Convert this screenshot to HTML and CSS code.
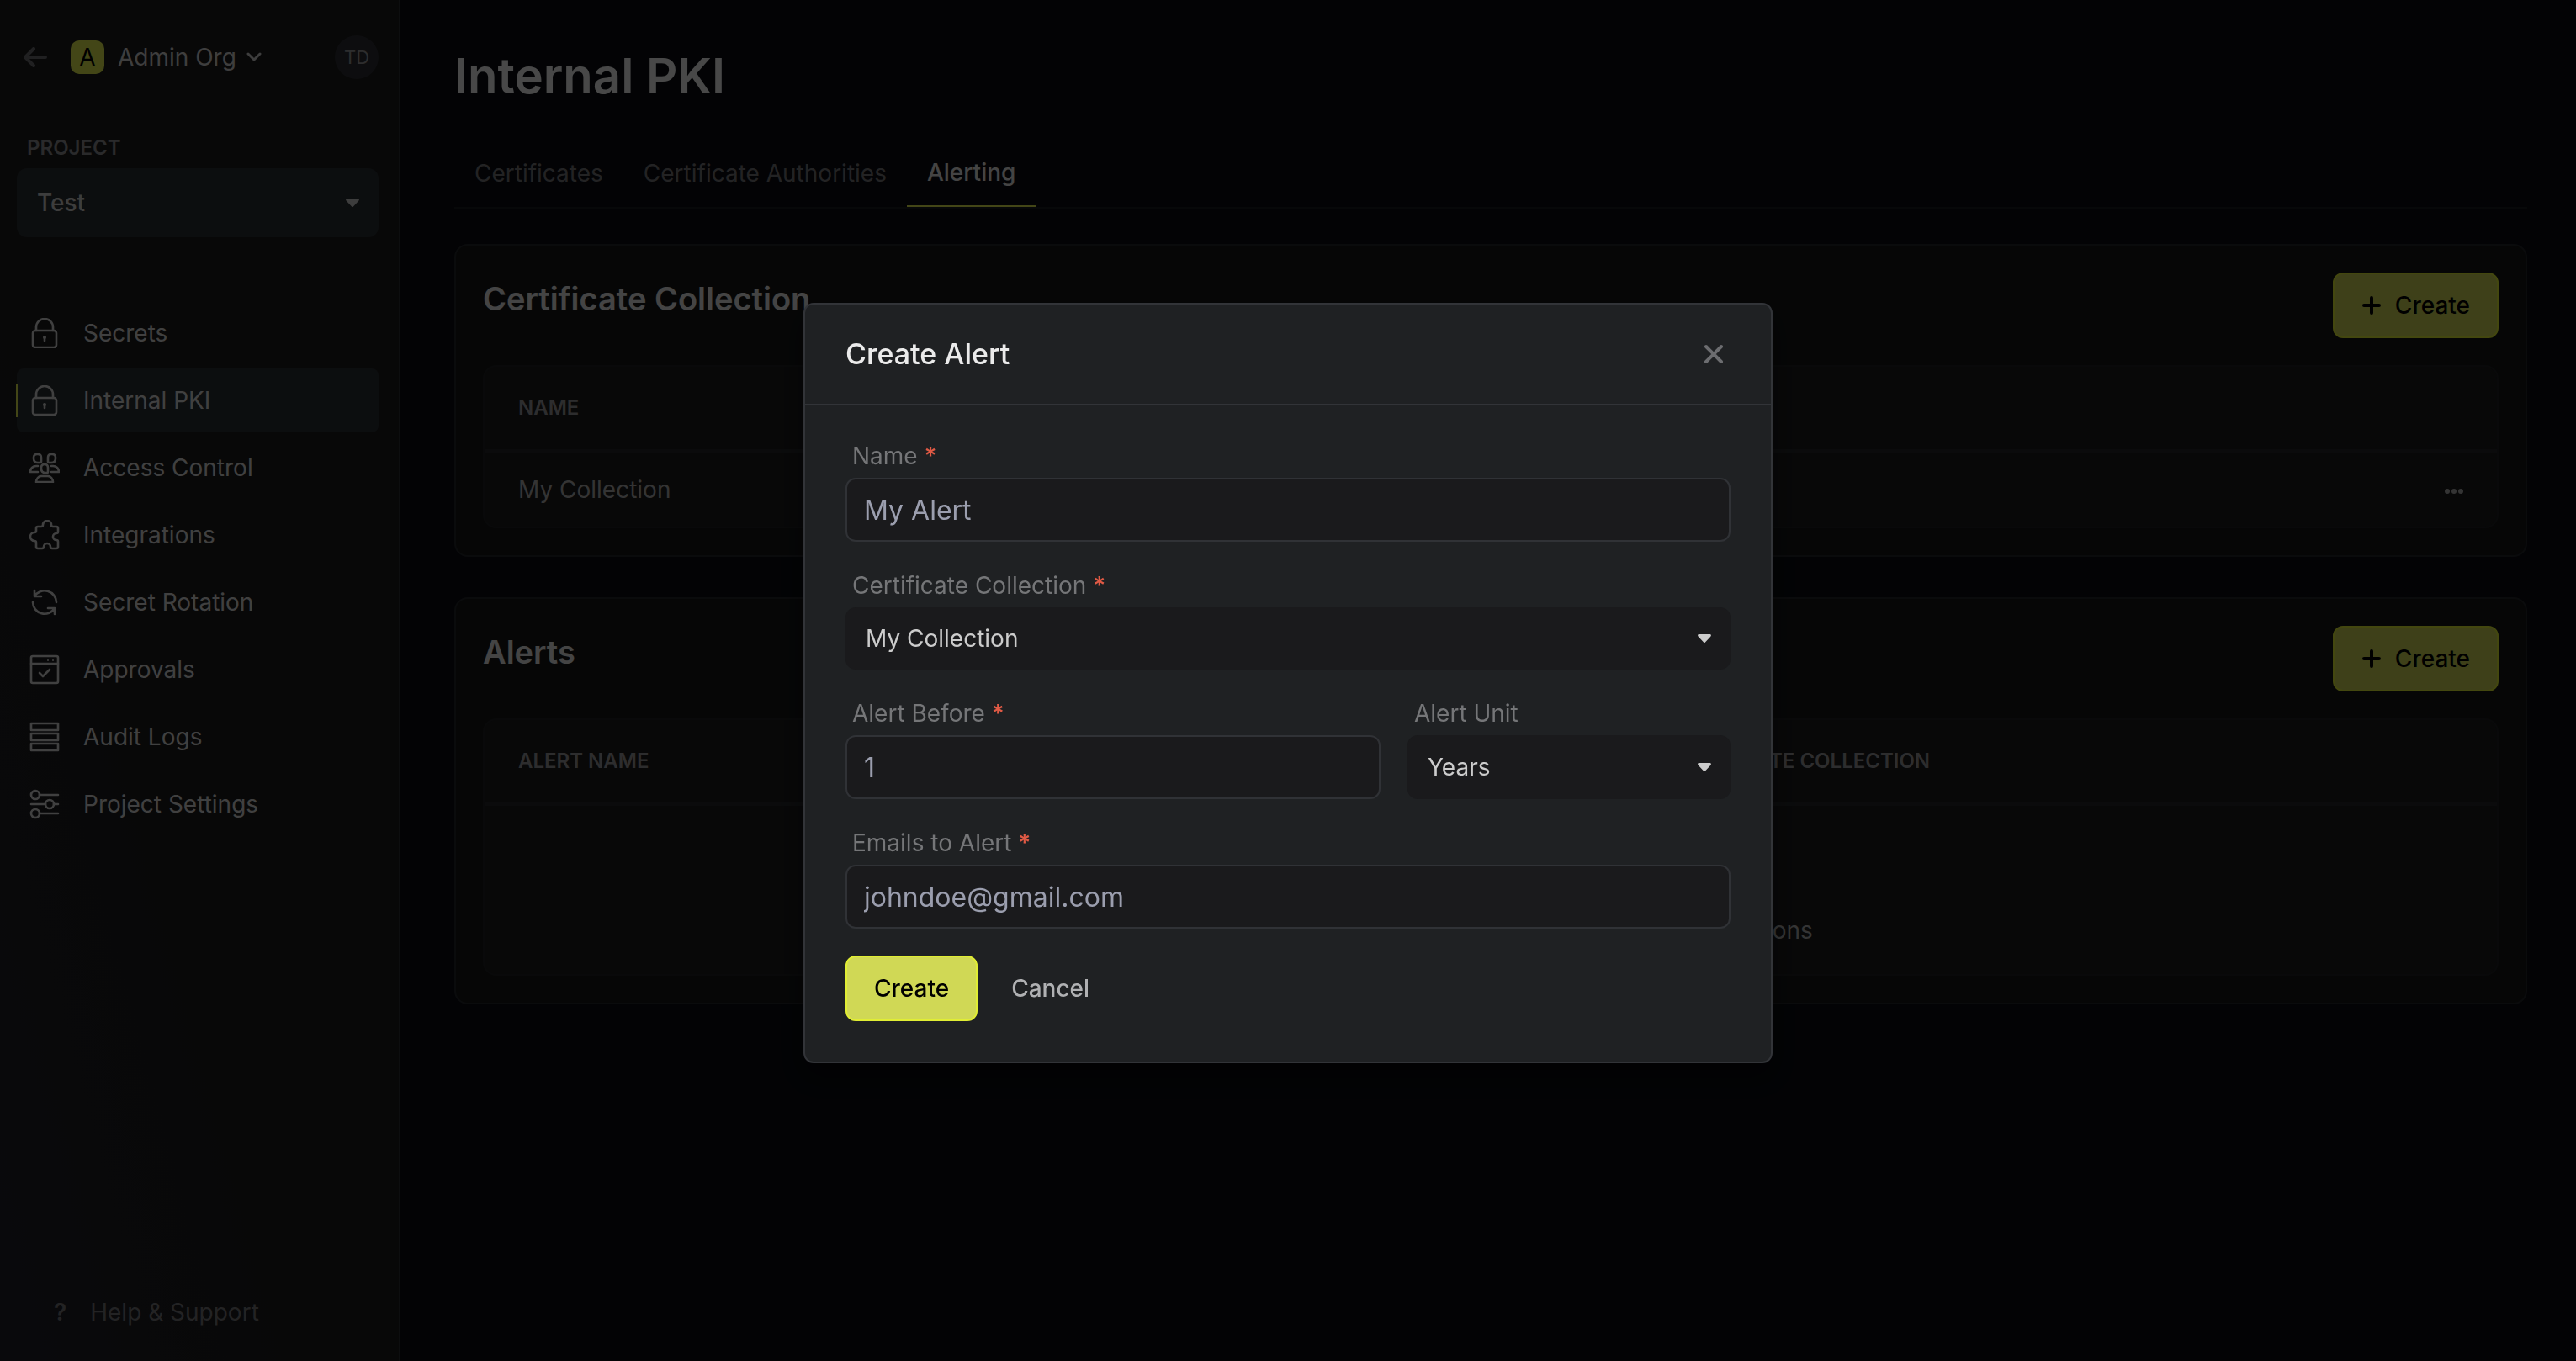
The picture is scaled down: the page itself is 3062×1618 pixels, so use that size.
FILE: index.html
```html
<!DOCTYPE html>
<html lang="en">
<head>
    <meta charset="UTF-8">
    <meta name="viewport" content="width=device-width, initial-scale=1.0">
    <title>Internal PKI - Alerting</title>
    <link rel="stylesheet" href="styles.css">
</head>
<body>
    <div class="layout">
        <aside class="sidebar">
            <div class="org-bar">
                <a href="#" class="back" aria-label="Back">
                    <svg width="28" height="24" viewBox="0 0 28 24" fill="none" stroke="currentColor" stroke-width="4" stroke-linecap="round" stroke-linejoin="round"><path d="M26 12H2M12 2L2 12l10 10"/></svg>
                </a>
                <button type="button" class="org-btn">
                    <span class="org-logo">A</span>
                    Admin Org
                    <svg width="18" height="12" viewBox="0 0 18 12" fill="none" stroke="currentColor" stroke-width="3" stroke-linecap="round" stroke-linejoin="round"><path d="M2 2l7 7 7-7"/></svg>
                </button>
                <button type="button" class="avatar">TD</button>
            </div>

            <label class="project-label" for="project">PROJECT</label>
            <div class="select-wrap project-select">
                <select id="project"><option>Test</option></select>
                <svg class="caret" width="16" height="10" viewBox="0 0 16 10"><path fill="currentColor" d="M1.6 0h12.800c1.400 0 2 1.400 1.100 2.400L9 9.400c-.6.700-1.400.700-2 0L.5 2.400C-.4 1.400.2 0 1.600 0z"/></svg>
            </div>

            <nav class="menu">
                <a href="#" class="menu-item">
                    <svg class="icon" viewBox="0 0 36 36"><rect x="4" y="15" width="28" height="20" rx="3"/><path d="M8 15v-4a10 10 0 0 1 20 0v4"/><circle class="dot" cx="18" cy="23" r="2"/><path d="M18 23v4"/></svg>
                    Secrets
                </a>
                <a href="#" class="menu-item active">
                    <svg class="icon" viewBox="0 0 36 36"><rect x="4" y="15" width="28" height="20" rx="3"/><path d="M8 15v-4a10 10 0 0 1 20 0v4"/><circle class="dot" cx="18" cy="23" r="2"/><path d="M18 23v4"/></svg>
                    Internal PKI
                </a>
                <a href="#" class="menu-item">
                    <svg class="icon" viewBox="0 0 36 36"><path d="M5 6q0-4 4-4h1q4 0 4 4v5q0 1-1 1h-3q-5 0-5-5zM31 6q0-4-4-4h-1q-4 0-4 4v5q0 1 1 1h3q5 0 5-5zM14 18q0-4 4-4t4 4v5q0 1-1 1h-2q-5 0-5-5z"/><path d="M10 23H1c0-4 3-7 7-7h2M26 23h9c0-4-3-7-7-7h-2M8 35c0-4 3-7 6-7h8c3 0 6 3 6 7z"/></svg>
                    Access Control
                </a>
                <a href="#" class="menu-item">
                    <svg class="icon" viewBox="0 0 36 36"><path d="M8 10q0-2 2-2h4q2 0 2-2a5 5 0 0 1 10 0q0 2 2 2h4q2 0 2 2v4q0 2-2 2a4 4 0 0 0 0 8q2 0 2 2v6q0 2-2 2h-5q-2 0-2-2a4 4 0 0 0-8 0q0 2-2 2h-5q-2 0-2-2v-5q0-2-2-2a5 5 0 0 1 0-10q2 0 2-2z"/></svg>
                    Integrations
                </a>
                <a href="#" class="menu-item">
                    <svg class="icon" viewBox="0 0 36 36"><path d="M6 4v7h8M6 11A14 14 0 0 1 32 18M30 32v-7h-8M30 25A14 14 0 0 1 4 18"/></svg>
                    Secret Rotation
                </a>
                <a href="#" class="menu-item">
                    <svg class="icon" viewBox="0 0 36 36"><rect x="2" y="2" width="32" height="32" rx="2"/><path d="M2 11h32M12 22l4 4 8-8"/><circle class="dot" cx="22" cy="7" r="1"/><circle class="dot" cx="28" cy="7" r="1"/></svg>
                    Approvals
                </a>
                <a href="#" class="menu-item">
                    <svg class="icon" viewBox="0 0 36 36"><path d="M2 2h32v8H2zM2 14h32v8H2zM2 26h32v8H2z"/></svg>
                    Audit Logs
                </a>
                <a href="#" class="menu-item">
                    <svg class="icon" viewBox="0 0 36 36"><circle cx="7" cy="7" r="5"/><circle cx="24" cy="18" r="5"/><circle cx="7" cy="29" r="5"/><path d="M12 7h22M2 18h17M29 18h5M12 29h22"/></svg>
                    Project Settings
                </a>
            </nav>

            <a href="#" class="help"><span class="help-mark">?</span>Help &amp; Support</a>
        </aside>

        <main class="content">
            <h1>Internal PKI</h1>
            <div class="tabs">
                <button type="button" class="tab">Certificates</button>
                <button type="button" class="tab">Certificate Authorities</button>
                <button type="button" class="tab active">Alerting</button>
            </div>

            <section class="card">
                <div class="card-head">
                    <h2>Certificate Collection</h2>
                    <button type="button" class="btn">
                        <svg width="24" height="24" viewBox="0 0 24 24" fill="none" stroke="currentColor" stroke-width="4" stroke-linecap="round"><path d="M12 3v18M3 12h18"/></svg>
                        Create
                    </button>
                </div>
                <div class="table-wrap">
                    <table>
                        <thead>
                            <tr><th>NAME</th><th></th></tr>
                        </thead>
                        <tbody>
                            <tr>
                                <td>My Collection</td>
                                <td class="row-actions">
                                    <button type="button" class="more" aria-label="More">
                                        <svg width="22" height="6" viewBox="0 0 22 6" fill="currentColor"><circle cx="3" cy="3" r="3"/><circle cx="11" cy="3" r="3"/><circle cx="19" cy="3" r="3"/></svg>
                                    </button>
                                </td>
                            </tr>
                        </tbody>
                    </table>
                </div>
            </section>

            <section class="card">
                <div class="card-head">
                    <h2>Alerts</h2>
                    <button type="button" class="btn">
                        <svg width="24" height="24" viewBox="0 0 24 24" fill="none" stroke="currentColor" stroke-width="4" stroke-linecap="round"><path d="M12 3v18M3 12h18"/></svg>
                        Create
                    </button>
                </div>
                <div class="table-wrap">
                    <table class="alerts">
                        <thead>
                            <tr>
                                <th>ALERT NAME</th>
                                <th>ALERT BEFORE</th>
                                <th>CERTIFICATE COLLECTION</th>
                            </tr>
                        </thead>
                        <tbody>
                            <tr>
                                <td colspan="3" class="empty">No alerts have been created for any certificate collections</td>
                            </tr>
                        </tbody>
                    </table>
                </div>
            </section>
        </main>
    </div>

    <div class="overlay">
        <div class="modal" role="dialog" aria-labelledby="modal-title">
            <div class="modal-head">
                <h3 id="modal-title">Create Alert</h3>
                <button type="button" class="close" aria-label="Close">
                    <svg width="24" height="24" viewBox="0 0 24 24" fill="none" stroke="currentColor" stroke-width="4" stroke-linecap="round"><path d="M3 3l18 18M21 3L3 21"/></svg>
                </button>
            </div>
            <form class="modal-body">
                <div class="field">
                    <label for="name">Name <span class="req">*</span></label>
                    <input type="text" id="name" value="My Alert">
                </div>
                <div class="field">
                    <label for="collection">Certificate Collection <span class="req">*</span></label>
                    <div class="select-wrap">
                        <select id="collection"><option>My Collection</option></select>
                        <svg class="caret" width="16" height="10" viewBox="0 0 16 10"><path fill="currentColor" d="M1.6 0h12.800c1.400 0 2 1.400 1.100 2.400L9 9.400c-.6.700-1.400.700-2 0L.5 2.400C-.4 1.400.2 0 1.600 0z"/></svg>
                    </div>
                </div>
                <div class="field-row">
                    <div class="field">
                        <label for="before">Alert Before <span class="req">*</span></label>
                        <input type="text" id="before" value="1">
                    </div>
                    <div class="field unit">
                        <label for="unit">Alert Unit</label>
                        <div class="select-wrap">
                            <select id="unit"><option>Years</option></select>
                            <svg class="caret" width="16" height="10" viewBox="0 0 16 10"><path fill="currentColor" d="M1.6 0h12.800c1.400 0 2 1.400 1.100 2.400L9 9.400c-.6.700-1.400.700-2 0L.5 2.400C-.4 1.400.2 0 1.600 0z"/></svg>
                        </div>
                    </div>
                </div>
                <div class="field">
                    <label for="emails">Emails to Alert <span class="req">*</span></label>
                    <input type="text" id="emails" value="johndoe@gmail.com">
                </div>
                <div class="actions">
                    <button type="submit" class="btn">Create</button>
                    <button type="button" class="btn-plain">Cancel</button>
                </div>
            </form>
        </div>
    </div>
</body>
</html>
```
FILE: styles.css
```css
* {
    box-sizing: border-box;
}
body {
    margin: 0;
    font-family: Inter, sans-serif;
    font-size: 28px;
    line-height: 40px;
    color: #d8d8d8;
    background-color: #0a0c12;
}
button,
input,
select {
    font: inherit;
    color: inherit;
}
button {
    background: none;
    border: none;
    padding: 0;
    cursor: pointer;
}
a {
    color: inherit;
    text-decoration: none;
}
svg {
    flex-shrink: 0;
}
h1,
h2,
h3 {
    margin: 0;
}
.layout {
    display: flex;
    min-height: 100vh;
}

/* sidebar */
.sidebar {
    display: flex;
    flex-direction: column;
    width: 476px;
    padding: 42px 24px 38px 20px;
    background: linear-gradient(75deg, #20202a, #1c1c1c 40%, #1b1b1b);
    border-right: 2px solid #2d2f33;
}
.org-bar {
    display: flex;
    align-items: center;
    height: 52px;
    padding-left: 8px;
    margin-bottom: 64px;
}
.back {
    display: flex;
    color: #6c6c70;
}
.org-btn {
    display: flex;
    align-items: center;
    gap: 12px;
    margin-left: 28px;
    color: #d0d0d0;
}
.org-logo {
    width: 40px;
    margin-right: 4px;
    border-radius: 10px;
    background-color: #dfec4e;
    color: #000;
}
.avatar {
    width: 52px;
    height: 52px;
    margin-left: auto;
    border-radius: 50%;
    background-color: #2d2e33;
    color: #96969a;
    font-size: 22px;
}
.project-label {
    margin-bottom: 6px;
    padding: 0 12px;
    font-size: 24px;
    line-height: 36px;
    font-weight: 600;
    color: #8c8c92;
}
.select-wrap {
    display: flex;
    align-items: center;
    position: relative;
}
.select-wrap select {
    width: 100%;
    height: 74px;
    padding: 0 24px;
    appearance: none;
    border: none;
    border-radius: 12px;
    background-color: #1a1a1c;
    color: #cccccc;
}
.caret {
    position: absolute;
    right: 23px;
    color: #cccccc;
    pointer-events: none;
}
.project-select select {
    height: 82px;
    background-color: #2b2f33;
    font-weight: 500;
}
.menu {
    display: flex;
    flex-direction: column;
    gap: 4px;
    margin-top: 76px;
}
.menu-item {
    display: flex;
    align-items: center;
    gap: 28px;
    height: 76px;
    padding-left: 15px;
    border-radius: 8px;
    color: #d8d8d8;
}
.menu-item.active {
    position: relative;
    background-color: #2b2f33;
}
.menu-item.active::before {
    content: "";
    position: absolute;
    left: -1px;
    width: 2px;
    height: 40px;
    background-color: #dfec4e;
}
.icon {
    width: 36px;
    height: 36px;
    fill: none;
    stroke: currentColor;
    stroke-width: 2.6;
    stroke-linecap: round;
    stroke-linejoin: round;
}
.icon .dot {
    fill: currentColor;
    stroke: none;
}
.help {
    display: flex;
    gap: 28px;
    margin-top: auto;
    padding-left: 44px;
    color: #77777b;
}
.help-mark {
    font-weight: 600;
}

/* page content */
.content {
    flex: 1;
    padding: 54px 58px 48px 64px;
}
h1 {
    font-size: 58px;
    line-height: 72px;
    font-weight: 600;
    color: #f0f0f0;
}
.tabs {
    display: flex;
    margin: 38px 0 42px;
    border-bottom: 2px solid #1a1c20;
}
.tab {
    height: 82px;
    padding: 2px 24px 0;
    color: #77777b;
}
.tab.active {
    border-bottom: 2px solid #dfec4e;
    color: #e4e4e4;
    font-weight: 500;
}
.card {
    margin-bottom: 48px;
    padding: 32px;
    border: 2px solid #24262a;
    border-radius: 16px;
    background-color: #151617;
}
.card-head {
    display: flex;
    justify-content: space-between;
    margin-bottom: 32px;
}
h2 {
    font-size: 38px;
    line-height: 62px;
    font-weight: 600;
    color: #e4e4e4;
}
.btn {
    display: flex;
    align-items: center;
    gap: 16px;
    height: 78px;
    padding: 0 32px;
    border: 2px solid #e0ed34;
    border-radius: 12px;
    background-color: #d0d855;
    color: #000;
    font-weight: 500;
}
.table-wrap {
    border: 2px solid #1f2022;
    border-radius: 16px;
    background-color: #1b1b1c;
}
table {
    width: 100%;
    border-collapse: collapse;
}
th {
    height: 100px;
    padding: 0 40px;
    border-bottom: 4px solid #25272a;
    font-size: 24px;
    font-weight: 600;
    text-align: left;
    color: #98989b;
}
td {
    height: 90px;
    padding: 0 40px;
    color: #b0b0b0;
}
.row-actions {
    text-align: right;
}
.more {
    display: inline-flex;
    vertical-align: middle;
}
.alerts {
    table-layout: fixed;
}
.alerts th:nth-child(1) {
    width: 25%;
}
.alerts th:nth-child(3) {
    width: 43%;
}
.empty {
    height: 202px;
    padding-top: 96px;
    text-align: center;
}

/* modal */
.overlay {
    position: fixed;
    inset: 0;
    display: flex;
    align-items: center;
    justify-content: center;
    padding-top: 6px;
    background-color: rgba(0, 0, 0, 0.7);
}
.modal {
    width: 1152px;
    border: 2px solid #323438;
    border-radius: 12px;
    background-color: #1f2123;
    box-shadow: 0 16px 32px rgba(0, 0, 0, 0.4);
}
.modal-head {
    display: flex;
    align-items: center;
    justify-content: space-between;
    height: 120px;
    padding: 0 56px 0 48px;
    border-bottom: 2px solid #323438;
}
h3 {
    font-size: 34px;
    font-weight: 500;
    color: #ebebeb;
}
.close {
    display: flex;
    color: #6c6d70;
}
.modal-body {
    display: flex;
    flex-direction: column;
    gap: 32px;
    padding: 40px 48px 48px;
}
.field {
    flex: 1;
    display: flex;
    flex-direction: column;
    gap: 6px;
}
.field label {
    padding-left: 8px;
    color: #757678;
}
.req {
    color: #e05a45;
    font-weight: 600;
}
.field input {
    width: 100%;
    height: 76px;
    padding: 0 20px;
    border: 2px solid #303236;
    border-radius: 12px;
    background-color: #1a1a1c;
    color: #9b9eae;
    font-size: 32px;
}
.field-row {
    display: flex;
    gap: 32px;
}
.unit {
    flex: 0 0 384px;
}
.unit select {
    height: 76px;
}
.actions {
    display: flex;
    align-items: center;
    gap: 40px;
}
.btn-plain {
    color: #b0b1b3;
    font-weight: 500;
}
```
